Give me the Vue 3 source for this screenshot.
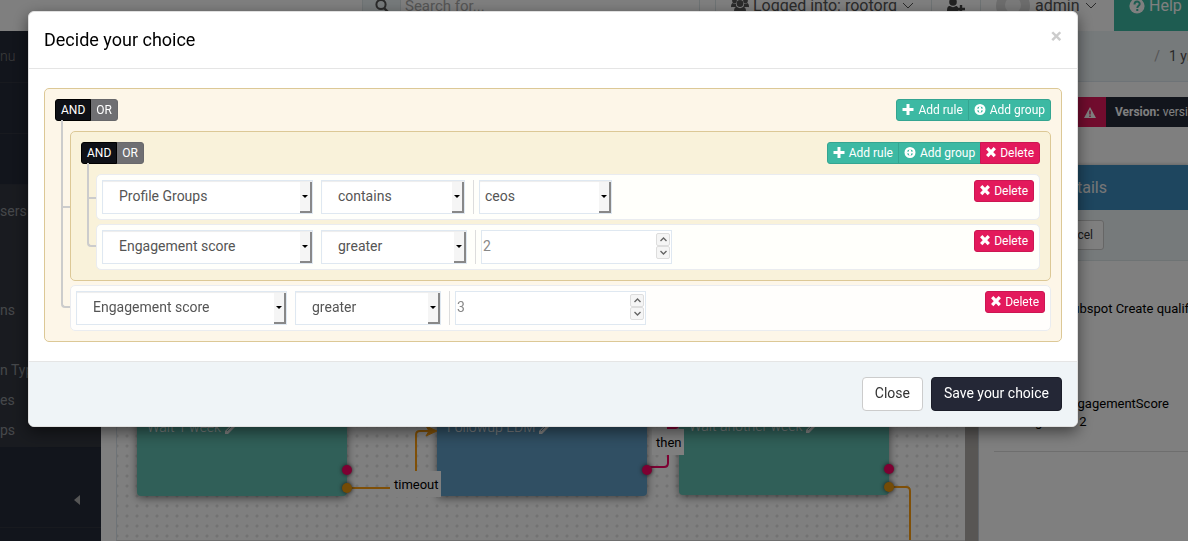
<script setup>
import { ref } from 'vue'

const inner = ref([
  { id: 'r1', field: 'Profile Groups', op: 'contains', kind: 'select', value: 'ceos' },
  { id: 'r2', field: 'Engagement score', op: 'greater', kind: 'number', value: 2 }
])
const outer = ref([
  { id: 'r3', field: 'Engagement score', op: 'greater', kind: 'number', value: 3 }
])
const fields = ['Profile Groups', 'Engagement score']
const ops = ['contains', 'greater']
const groups = [
  { id: 'inner', rules: inner },
  { id: 'outer', rules: outer }
]
const menu = ['sers', 'ns', 'n Types', 'es', 'ps']
</script>

<template>
  <div class="page">
    <header class="topbar">
      <div class="search">
        <span class="search-icon">
          <svg width="14" height="14" viewBox="0 0 14 14"><circle cx="6" cy="5.500" r="4.600" fill="none" stroke="#555" stroke-width="2" /><path d="M9 9l4 4" stroke="#555" stroke-width="2.400" /></svg>
        </span>
        <input type="text" placeholder="Search for..." aria-label="Search" />
      </div>
      <nav class="topnav">
        <a href="#" class="org">
          <svg width="18" height="16" viewBox="0 0 18 16" fill="#555"><circle cx="3.500" cy="3" r="2.400" /><circle cx="14.500" cy="3" r="2.400" /><circle cx="9" cy="5.500" r="3.400" /><path d="M0 9c0-3 1-4 2-4 1 1 2 1 3 .5C5 7 5 8 6 9H1.500C.5 9 0 9.500 0 9zM18 9c0-3-1-4-2-4-1 1-2 1-3 .5 0 1.500 0 2.500-1 3.500h4.500c1 0 1.500.5 1.500 0zM3 14c0-4 1-5 3-5 2 1.500 4 1.500 6 0 2 0 3 1 3 5 0 1-1 2-2 2H5c-1 0-2-1-2-2z" /></svg>
          <span>Logged into: rootorg</span>
          <svg class="chev" width="12" height="8" viewBox="0 0 12 8" fill="none" stroke="#555"><path d="M1 1l5 5 5-5" /></svg>
        </a>
        <a href="#" class="adduser" aria-label="Add user">
          <svg width="18" height="16" viewBox="0 0 18 16" fill="#444"><circle cx="6" cy="4" r="3.800" /><path d="M0 13c0-4 1-5 3-5 2 1.500 4 1.500 6 0 1 0 1.500.5 2 1.500v3h2V14c-1 1-1 1-2 1H2c-1 0-2-1-2-2z" /><path d="M14 7v8M10 11h8" stroke="#444" stroke-width="2.400" /></svg>
        </a>
        <a href="#" class="user">
          <svg width="34" height="34" viewBox="0 0 34 34"><circle cx="17" cy="17" r="17" fill="#dadada" /><circle cx="17" cy="16" r="8" fill="#f5f5f5" /><path d="M6 29c2-5 20-5 22 0-6 6-16 6-22 0z" fill="#f5f5f5" /></svg>
          <span>admin</span>
          <svg class="chev" width="12" height="8" viewBox="0 0 12 8" fill="none" stroke="#555"><path d="M1 1l5 5 5-5" /></svg>
        </a>
        <a href="#" class="help">
          <svg width="16" height="16" viewBox="0 0 16 16"><circle cx="8" cy="8" r="7.600" fill="#fff" /><path d="M5.500 6.500c0-4 5.200-3.600 5.200-.6 0 1.900-2.400 1.900-2.400 4M8.300 11v2" fill="none" stroke="#3cb9a3" stroke-width="2" /></svg>
          <span>Help</span>
        </a>
      </nav>
    </header>

    <div class="frame">
      <aside class="sidebar">
        <div class="side-title">nu</div>
        <div class="side-gap"></div>
        <div class="side-gap"></div>
        <ul class="submenu">
          <li v-for="m in menu" :key="m"><a href="#">{{ m }}</a></li>
        </ul>
        <div class="collapse">
          <svg width="6" height="10" viewBox="0 0 6 10"><path d="M6 0v10L0 5z" fill="#aaa" /></svg>
        </div>
      </aside>

      <main class="main">
        <div class="crumbs"><span class="slash">/</span><span>1 yr ago</span></div>
        <div class="work">
          <div class="canvas">
            <div class="node n1"><span>Wait 1 week</span><svg width="11" height="11" viewBox="0 0 11 11"><path d="M0 11V8l7-7q1-1 2 0l1 1q1 1 0 2l-7 7z" fill="#fff" /><path d="M2 8l5-5" stroke="#60beb0" /></svg></div>
            <div class="node n2"><span>Followup EDM</span><svg width="11" height="11" viewBox="0 0 11 11"><path d="M0 11V8l7-7q1-1 2 0l1 1q1 1 0 2l-7 7z" fill="#fff" /><path d="M2 8l5-5" stroke="#609ec6" /></svg></div>
            <div class="node n3"><span>Wait another week</span><svg width="11" height="11" viewBox="0 0 11 11"><path d="M0 11V8l7-7q1-1 2 0l1 1q1 1 0 2l-7 7z" fill="#fff" /><path d="M2 8l5-5" stroke="#60beb0" /></svg></div>
            <svg class="wires" width="849" height="459" viewBox="0 0 849 459" fill="none" stroke-width="2">
              <path d="M231 406H296Q300 406 300 402V353Q300 349 304 349H318" stroke="#ff9f0f" />
              <path d="M310 344l11 5-11 5 3-5z" fill="#ff9f0f" stroke="#ff9f0f" stroke-width="1" />
              <path d="M531 385H548Q552 385 552 381V346H560" stroke="#fa0064" />
              <path d="M773 405H790Q794 405 794 409V459" stroke="#ff9f0f" />
              <circle cx="559" cy="343" r="4" fill="#fa0064" />
              <g class="ports" fill="#fa0064"><circle cx="231" cy="388" r="5" /><circle cx="531" cy="388" r="5" /><circle cx="773" cy="387" r="5" /></g>
              <g class="ports" fill="#e8960c"><circle cx="231" cy="406" r="5" /><circle cx="773" cy="405" r="5" /></g>
            </svg>
            <span class="tag t1">timeout</span>
            <span class="tag t2">then</span>
          </div>
          <div class="splitter"></div>
          <section class="panel">
            <div class="version"><span class="warn"><svg width="12" height="11" viewBox="0 0 12 11"><path d="M6 0l6 11H0z" fill="#fff" /><path d="M6 3.500v4M6 8.500v1.500" stroke="#e3195c" stroke-width="1.400" /></svg></span><span class="vtext"><b>Version:</b> version 1</span></div>
            <h2>Details</h2>
            <div class="tools"><button type="button" class="cancel">Cancel</button></div>
            <div class="info">
              <p class="action">Hubspot Create qualified</p>
              <p class="metric">EngagementScore</p>
              <p class="cond">greater 2</p>
            </div>
          </section>
        </div>
      </main>
    </div>

    <div class="overlay">
      <div class="modal" role="dialog" aria-labelledby="dlg-title">
        <div class="modal-head">
          <h1 id="dlg-title">Decide your choice</h1>
          <button type="button" class="x" aria-label="Dismiss">×</button>
        </div>
        <div class="modal-body">
          <div class="group root">
            <div class="group-head">
              <div class="btns"><button type="button" class="b and">AND</button><button type="button" class="b or">OR</button></div>
              <div class="btns">
                <button type="button" class="b green"><svg class="ic" viewBox="0 0 12 12"><path d="M6 0v11M0.500 5.500h11" stroke="#fff" stroke-width="3" /></svg>Add rule</button>
                <button type="button" class="b green"><svg class="ic" viewBox="0 0 12 12"><circle cx="6" cy="5.500" r="4.300" fill="none" stroke="#fff" stroke-width="2.400" /><path d="M6 2.500v6M3 5.500h6" stroke="#fff" stroke-width="2" /></svg>Add group</button>
              </div>
            </div>
            <div class="list">
              <div v-for="g in groups" :key="g.id" :class="g.id === 'inner' ? 'group nested node-item' : 'plain'">
                <div v-if="g.id === 'inner'" class="group-head">
                  <div class="btns"><button type="button" class="b and">AND</button><button type="button" class="b or">OR</button></div>
                  <div class="btns">
                    <button type="button" class="b green"><svg class="ic" viewBox="0 0 12 12"><path d="M6 0v11M0.500 5.500h11" stroke="#fff" stroke-width="3" /></svg>Add rule</button>
                    <button type="button" class="b green"><svg class="ic" viewBox="0 0 12 12"><circle cx="6" cy="5.500" r="4.300" fill="none" stroke="#fff" stroke-width="2.400" /><path d="M6 2.500v6M3 5.500h6" stroke="#fff" stroke-width="2" /></svg>Add group</button>
                    <button type="button" class="b red"><svg class="ic cross" viewBox="0 0 10 12"><path d="M1.200 1.200l7.600 8M8.800 1.200l-7.600 8" stroke="#fff" stroke-width="3.200" /></svg>Delete</button>
                  </div>
                </div>
                <div :class="g.id === 'inner' ? 'list' : 'plain'">
                  <div v-for="r in g.rules.value" :key="r.id" class="rule node-item">
                    <div class="controls">
                      <span class="sel field"><select v-model="r.field" aria-label="Field"><option v-for="f in fields" :key="f">{{ f }}</option></select><i></i></span>
                      <span class="sel" :class="r.op"><select v-model="r.op" aria-label="Operator"><option v-for="o in ops" :key="o">{{ o }}</option></select><i></i></span>
                      <span class="value">
                        <span v-if="r.kind === 'select'" class="sel short"><select v-model="r.value" aria-label="Value"><option>ceos</option></select><i></i></span>
                        <span v-else class="num">
                          <input v-model="r.value" type="number" aria-label="Value" />
                          <span class="spin">
                            <button type="button" aria-label="Increase" @click="r.value++"><svg width="7" height="5" viewBox="0 0 7 5"><path d="M.5 4l3-3 3 3" fill="none" stroke="#666" stroke-width="1.400" /></svg></button>
                            <button type="button" aria-label="Decrease" @click="r.value--"><svg width="7" height="5" viewBox="0 0 7 5"><path d="M.5 1l3 3 3-3" fill="none" stroke="#666" stroke-width="1.400" /></svg></button>
                          </span>
                        </span>
                      </span>
                    </div>
                    <button type="button" class="b red"><svg class="ic cross" viewBox="0 0 10 12"><path d="M1.200 1.200l7.600 8M8.800 1.200l-7.600 8" stroke="#fff" stroke-width="3.200" /></svg>Delete</button>
                  </div>
                </div>
              </div>
            </div>
          </div>
        </div>
        <div class="modal-foot">
          <button type="button" class="big">Close</button>
          <button type="button" class="big dark">Save your choice</button>
        </div>
      </div>
    </div>
  </div>
</template>

<style>
body { background: #fff; }
</style>

<style scoped>
*, *::before, *::after { box-sizing: border-box; }
.page { height: 100vh; overflow: hidden; display: flex; flex-direction: column; font: 14px/20px Roboto, "Liberation Sans", sans-serif; color: #333; }
button, input, select { font-family: inherit; }
h1, h2, p, ul { margin: 0; padding: 0; font-weight: 400; }
a { color: inherit; text-decoration: none; }

.topbar { height: 50px; margin-top: -19px; flex: none; display: flex; justify-content: space-between; background: #fff; font-size: 16px; color: #555; }
.search { display: flex; margin-left: 362px; width: 338px; border: solid #dde6e9; border-width: 0 1px; }
.search-icon { width: 38px; display: flex; align-items: center; justify-content: center; background: #edf5f7; border-right: 1px solid #dde6e9; }
.search input { flex: 1; min-width: 0; border: 0; padding: 0 4px; font-size: 15px; }
.search input::placeholder { color: #aaa; }
.topnav { display: flex; white-space: nowrap; }
.topnav a { display: flex; align-items: center; border-left: 1px solid #dde6e9; padding-left: 15px; }
.org { width: 216px; }
.org span { margin: 0 5px 0 4px; }
.adduser { width: 49px; }
.user { width: 134px; }
.user span { margin: 0 6px 0 5px; }
.topnav .help { width: 74px; background: #3cb9a3; border: 0; color: #fff; gap: 4px; }

.frame { flex: 1; min-height: 0; display: flex; }
.sidebar { width: 101px; flex: none; background: #242a38; color: #8b8f95; font-weight: 300; overflow: hidden; }
.side-title { height: 52px; padding-top: 15px; border-bottom: 1px solid #30343f; color: #777; }
.side-gap { height: 51px; border-bottom: 1px solid #30343f; }
.submenu { list-style: none; background: #333740; height: 262px; padding-top: 12px; white-space: nowrap; }
.submenu li { height: 30px; padding-top: 4px; }
.submenu li:first-child { height: 99px; }
.submenu li:nth-child(2) { height: 60px; }
.collapse { height: 81px; padding: 48px 0 0 74px; line-height: 10px; border-bottom: 1px solid #30343f; }

.main { flex: 1; min-width: 0; display: flex; flex-direction: column; }
.crumbs { height: 51px; flex: none; background: #edf4f7; border-bottom: 1px solid #dde6ee; display: flex; justify-content: flex-end; align-items: center; gap: 9px; overflow: hidden; color: #555; }
.crumbs span:last-child { width: 19px; white-space: nowrap; }
.slash { color: #aaa; }
.work { flex: 1; min-height: 0; display: flex; padding-left: 15px; }
.canvas { flex: 1; min-width: 0; position: relative; overflow: hidden; border-left: 1px solid #dde6ee; border-bottom: 1px solid #ddd; background: radial-gradient(circle, #e4e4e4 1px, transparent 2px) 5px 9px / 10px 10px; }
.node { position: absolute; width: 210px; height: 120px; top: 294px; border-radius: 4px; background: #60beb0; box-shadow: 0 2px 8px rgba(0,0,0,.5); color: #fff; font-weight: 300; padding: 41px 10px; white-space: nowrap; }
.node svg { margin-left: 4px; vertical-align: -2px; }
.n1 { left: 20px; }
.n2 { left: 320px; background: #609ec6; }
.n3 { left: 562px; top: 293px; }
.wires { position: absolute; left: -1px; top: 0; }
.ports { filter: drop-shadow(0 0 2px #333); }
.tag { position: absolute; background: #fff; color: #000; font-size: 13px; padding: 4px 2px 2px 4px; height: 26px; }
.t1 { left: 273px; top: 389px; }
.t2 { left: 535px; top: 347px; }
.splitter { width: 13px; flex: none; background: #b0aca9; }
.panel { width: 210px; flex: none; border-left: 1px solid #c5ccd5; overflow: hidden; white-space: nowrap; font-size: 13px; color: #000; }
.version { display: flex; height: 30px; margin: 15px 0 38px 95px; color: #fff; line-height: 30px; font-size: 12px; }
.warn { width: 32px; flex: none; background: #e3195c; display: flex; align-items: center; justify-content: center; }
.vtext { flex: 1; background: #242a38; padding-left: 9px; }
.panel h2 { height: 45px; background: #3c8cbe; color: #eee; font-size: 16px; line-height: 46px; padding-left: 79px; box-shadow: 0 -1px 3px rgba(0,0,0,.2); }
.tools { height: 51px; background: #edf4f7; border-bottom: 1px solid #dde6e9; padding: 10px 0 0 61px; }
.cancel { height: 30px; width: 64px; border: 1px solid #ccc; border-radius: 3px; background: #fff; font-size: 12px; color: #333; padding: 0 10px; text-align: right; }
.info { margin-left: 15px; height: 191px; padding-top: 39px; line-height: 18px; border-bottom: 1px solid #ddd; }
.info p { padding-left: 69px; }
.info .action { margin-bottom: 77px; }
.info .cond { padding-left: 41px; }

.overlay { position: fixed; inset: 0; background: rgba(0,0,0,.5); padding: 11px 110px 0 28px; overflow: hidden; }
.modal { background: #fff; border: 1px solid #e0e0e0; border-radius: 6px; box-shadow: 0 5px 15px rgba(0,0,0,.5); overflow: hidden; color: #000; }
.modal-head { height: 57px; padding: 0 15px; display: flex; align-items: center; justify-content: space-between; border-bottom: 1px solid #e5e5e5; }
.modal-head h1 { font-size: 18px; line-height: 24px; }
.x { border: 0; background: none; padding: 0; font-weight: 700; font-size: 21px; line-height: 21px; color: #ccc; margin-bottom: 7px; }
.modal-body { padding: 19px 15px; }
.group { border: 1px solid #dcc896; border-radius: 5px; padding: 10px; background: #fdf6e8; }
.nested { background: #f9f2da; }
.group-head { display: flex; justify-content: space-between; margin-bottom: 10px; }
.list { padding-left: 15px; }
.btns { display: flex; }
.b { height: 22px; border: 1px solid; border-radius: 3px; padding: 0 5px; font-size: 12px; line-height: 18px; color: #fff; display: flex; align-items: center; justify-content: center; white-space: nowrap; }
.btns .b + .b { margin-left: -1px; border-top-left-radius: 0; border-bottom-left-radius: 0; }
.btns .b:not(:last-child) { border-top-right-radius: 0; border-bottom-right-radius: 0; }
.and { background: #0e1016; border-color: #000; position: relative; }
.or { background: #6f6f72; border-color: #68686b; }
.green { background: #3cb9a3; border-color: #34a591; }
.red { background: #e3195c; border-color: #cc1652; }
.ic { width: 12px; height: 12px; margin-right: 4px; }
.cross { width: 10px; }

.node-item { position: relative; margin-bottom: 4px; }
.rule.node-item:last-child { margin-bottom: 0; }
.node-item::before, .node-item::after { content: ''; position: absolute; left: -10px; width: 9px; height: calc(50% + 4px); border: solid #ccc; }
.node-item::before { top: -4px; border-width: 0 0 2px 2px; }
.node-item::after { top: 50%; border-width: 0 0 0 2px; }
.node-item:first-child:not(:last-child)::before, .nested::before { top: -12px; height: calc(50% + 14px); }
.rule.node-item:last-child::before { border-radius: 0 0 0 4px; }
.rule.node-item:last-child::after { display: none; }
.rule { display: flex; justify-content: space-between; align-items: flex-start; border: 1px solid #eaecf0; border-radius: 5px; padding: 5px; background: #fffffb; }
.plain .plain .rule { background: #fffefc; }
.controls { display: flex; gap: 8px; }
.sel { position: relative; height: 34px; display: block; }
.sel select { appearance: none; width: 100%; height: 34px; border: 1px solid #dfe8f1; border-radius: 0; background: #fff; box-shadow: inset 0 1px 1px rgba(0,0,0,.075); color: #555; font-size: 14px; padding: 0 16px 2px; }
.sel i { position: absolute; right: 1px; top: 2px; width: 12px; height: 31px; background: #f5f5f5; border: solid #888; border-width: 0 2px 2px 0; pointer-events: none; }
.sel i::after { content: ''; position: absolute; left: 2px; top: 13px; border: 3px solid transparent; border-top-color: #000; border-bottom: 0; }
.field { width: 211px; }
.contains { width: 144px; }
.greater { width: 146px; }
.short { width: 133px; }
.sel.short select { padding: 0 5px 2px; }
.value { border-left: 1px solid #ddd; padding-left: 5px; }
.num { display: flex; align-items: center; width: 191px; height: 34px; border: 1px solid #dfe8f1; background: #fff; padding-bottom: 2px; }
.num input { flex: 1; min-width: 0; border: 0; outline: 0; background: none; padding: 0 1px; font-size: 14px; color: #888; appearance: textfield; }
.num input::-webkit-inner-spin-button { display: none; }
.spin { display: flex; flex-direction: column; margin-right: 1px; }
.spin button { width: 14px; height: 13px; border: 1px solid #ddd; border-radius: 2px; background: #f5f5f5; padding: 0; display: flex; align-items: center; justify-content: center; }
.modal-foot { display: flex; justify-content: flex-end; gap: 8px; padding: 15px; border-top: 1px solid #e5e5e5; background: #eff4f7; }
.big { height: 34px; border: 1px solid #ccc; border-radius: 4px; background: #fff; padding: 0 12px 2px; font-size: 14px; color: #333; }
.dark { background: #242736; border-color: #1b1d29; color: #fff; }
</style>
